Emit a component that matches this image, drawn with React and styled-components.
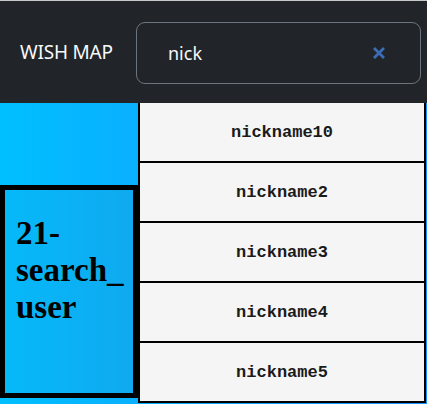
import React, { useState } from "react";
import styled, { createGlobalStyle } from "styled-components";

const GlobalStyle = createGlobalStyle`
  html, body {
    margin: 0;
    padding: 0;
    height: 100%;
  }
  body {
    overflow: hidden;
    font-family: "Noto Sans", "Open Sans", sans-serif;
  }
`;

const Page = styled.div`
  position: relative;
  display: flex;
  flex-direction: column;
  width: 427px;
  height: 404px;
`;

const Header = styled.header`
  display: flex;
  align-items: center;
  gap: 20px;
  height: 102px;
  padding: 0 6px 0 20px;
  background-color: #212529;
  border-top: 1px solid #c8c8c8;
`;

const Brand = styled.span`
  flex-shrink: 0;
  width: 96px;
  white-space: nowrap;
  color: #f8f9fa;
  font-size: 19px;
  letter-spacing: -0.2px;
`;

const SearchBox = styled.div`
  position: relative;
  display: flex;
  align-items: center;
  flex: 1;
  min-width: 0;
  height: 60px;
  margin-top: 2px;
  border: 1px solid #6c757d;
  border-radius: 9px;
`;

const SearchInput = styled.input`
  flex: 1;
  width: 100%;
  min-width: 0;
  height: 100%;
  padding: 0 0 0 31px;
  border: 0;
  outline: none;
  background: transparent;
  color: #f8f9fa;
  font-family: "Noto Sans", "Open Sans", sans-serif;
  font-size: 18px;
  caret-color: #ffffff;
`;

const ClearButton = styled.button`
  display: flex;
  flex-shrink: 0;
  align-items: center;
  justify-content: center;
  width: 20px;
  height: 20px;
  margin-right: 31px;
  padding: 0;
  border: 0;
  background: transparent;
  cursor: pointer;
`;

const Main = styled.main`
  flex: 1;
  display: flex;
  background: linear-gradient(to right, #00bfff, #1e90ff);
`;

const Card = styled.section`
  box-sizing: border-box;
  width: 138px;
  height: 213px;
  margin-top: 82px;
  padding: 25px 0 0 11px;
  border: 5px solid #000;
  background: linear-gradient(to right, #06b9fa, #10a9ee);
`;

const Title = styled.h1`
  margin: 0;
  color: #000;
  font-family: "Liberation Serif", "Times New Roman", serif;
  font-size: 33px;
  font-weight: bold;
  line-height: 37px;
  word-break: break-word;
`;

const Dropdown = styled.ul`
  position: absolute;
  top: 103px;
  left: 138px;
  box-sizing: border-box;
  width: 288px;
  margin: 0;
  padding: 0;
  list-style: none;
  border: 2px solid #000;
  border-top: 0;
`;

const Option = styled.li`
  display: flex;
  align-items: center;
  justify-content: center;
  height: 58px;
  background-color: #f5f5f5;
  border-top: ${(p) => (p.$first ? "0" : "2px solid #000")};
  color: #1a1a1a;
  font-family: "Liberation Mono", "Courier New", monospace;
  font-size: 17px;
  font-weight: bold;
  cursor: pointer;
`;

const users = ["nickname10", "nickname2", "nickname3", "nickname4", "nickname5"];

const CloseIcon = () => (
  <svg width="14" height="14" viewBox="0 0 14 14">
    <path
      d="M2 2 L12 12 M12 2 L2 12"
      stroke="#3c6db8"
      strokeWidth="2.8"
      strokeLinecap="butt"
    />
  </svg>
);

export default function App() {
  const [query, setQuery] = useState("nick");

  return (
    <>
      <GlobalStyle />
      <Page>
        <Header>
          <Brand>WISH MAP</Brand>
          <SearchBox>
            <SearchInput
              value={query}
              onChange={(e) => setQuery(e.target.value)}
              autoFocus
            />
            <ClearButton aria-label="clear" onClick={() => setQuery("")}>
              <CloseIcon />
            </ClearButton>
          </SearchBox>
        </Header>
        <Main>
          <Card>
            <Title>21-search_user</Title>
          </Card>
        </Main>
        <Dropdown>
          {users.map((u, i) => (
            <Option key={u} $first={i === 0}>
              {u}
            </Option>
          ))}
        </Dropdown>
      </Page>
    </>
  );
}
